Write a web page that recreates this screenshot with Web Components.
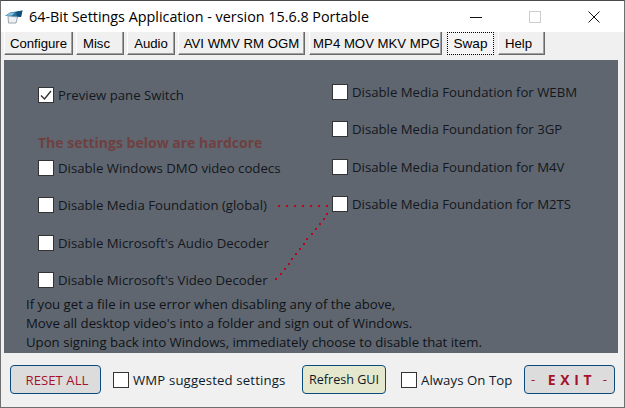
<!DOCTYPE html>
<html><head><meta charset="utf-8"><style>
html,body{margin:0;padding:0;background:#f0f0f0}
body{font-family:"Open Sans","Noto Sans",sans-serif;overflow:hidden}
</style></head><body>
<x-window>
<x-titlebar slot="title">64-Bit Settings Application - version 15.6.8 Portable</x-titlebar>
<x-tab slot="tabs" w="69">Configure</x-tab><x-tab slot="tabs" w="48" style="padding-right:7px">Misc</x-tab><x-tab slot="tabs" w="48">Audio</x-tab><x-tab slot="tabs" w="127">AVI WMV RM OGM</x-tab><x-tab slot="tabs" w="133" style="margin-left:1px;padding-left:2px">MP4 MOV MKV MPG</x-tab><x-tab slot="tabs" w="47" focus style="margin-left:2px">Swap</x-tab><x-tab slot="tabs" w="47" style="margin-left:1px;padding-right:6px">Help</x-tab>
<x-panel slot="panel"></x-panel>
<x-footer slot="footer"></x-footer>
</x-window>
<script>
function tpl(s){const t=document.createElement('template');t.innerHTML=s;return t}
function def(n,t,init){customElements.define(n,class extends HTMLElement{connectedCallback(){if(this.shadowRoot)return;const r=this.attachShadow({mode:'open'});r.appendChild(t.content.cloneNode(true));init&&init(this,r)}})}
def('x-window',tpl(`<style>:host{display:flex;flex-direction:column;box-sizing:border-box;width:625px;height:408px;background:#f0f0f0;border:1px solid #6e6e6e;border-top-color:#4a4a4a;overflow:hidden}
.tabs{display:flex;gap:3px;padding:0 0 0 3px;height:23px}
.p{display:block;margin:5px 5px 0 3px}
</style><slot name="title"></slot><div class="tabs"><slot name="tabs"></slot></div><div class="p"><slot name="panel"></slot></div><slot name="footer"></slot>`));
def('x-titlebar',tpl(`<style>:host{display:flex;align-items:center;height:31px;background:#fff;flex:none}
svg{display:block}.ic{margin-left:4px;width:18px;height:14px}
.t{margin-left:6px;font:14.35px "Open Sans",sans-serif;color:#000;flex:1;white-space:nowrap}
.b{width:58.5px;display:flex;justify-content:center;align-items:center}
.bs{display:flex;margin-right:1px}</style>
<svg class="ic" viewBox="0 0 18 14"><path d="M3 6 L12.5 7 L11 13 L3.5 13Z" fill="#eef1f4" stroke="#9aa4ae" stroke-width="1"/><path d="M0 6 L5 2.5 L17.5 0.5 L16 7 L6 6Z" fill="#2a7099"/><path d="M1 6 L5 3 L10 2.5 L7 5.5Z" fill="#86c3e0"/><path d="M11 2L17.5 .5L16 7L12 6.5Z" fill="#12507c"/></svg>
<div class="t"><slot></slot></div>
<div class="bs"><div class="b" style="position:relative;left:-1px"><svg width="12" height="12"><path d="M0 6.5H12" stroke="#111"/></svg></div><div class="b"><svg width="12" height="12"><rect x=".5" y=".5" width="11" height="11" fill="none" stroke="#ccc"/></svg></div><div class="b"><svg width="12" height="12"><path d="M.5 .5L11.5 11.5M11.5 .5L.5 11.5" stroke="#111"/></svg></div></div>`));
def('x-tab',tpl(`<style>:host{display:flex;align-items:center;justify-content:center;box-sizing:border-box;height:23px;background:#f0f0f0;border-style:solid;border-width:0 1px 1px 1px;border-color:#fff #696969 #696969 #fff;box-shadow:inset -1px -1px 0 #a0a0a0;font:13.2px "Liberation Sans",sans-serif;color:#000;white-space:nowrap}
:host([focus]){border:1px dotted #000;box-shadow:inset 0 0 0 1px #f8f8f8;background:#f4f4f4;font-size:13.6px}
</style><span><slot></slot></span>`),(h)=>{h.style.width=h.getAttribute('w')+'px'});
def('x-check',tpl(`<style>:host{display:flex;align-items:center;font:13.2px "Open Sans",sans-serif;color:var(--tc,#14171c);white-space:nowrap;height:16px}
.b{box-sizing:border-box;width:16px;height:16px;background:#fff;border:1px solid #333;margin-right:4px;flex:none;display:flex;align-items:center;justify-content:center}
svg{display:none}:host([checked]) svg{display:block}</style>
<div class="b"><svg width="12" height="12" viewBox="0 0 12 12"><path d="M1 6.5L4.5 10L11 2" fill="none" stroke="#333" stroke-width="1.4"/></svg></div><span><slot></slot></span>`));
def('x-btn',tpl(`<style>:host{display:flex;align-items:center;justify-content:center;box-sizing:border-box;height:29px;border:1px solid #0b4a7c;border-radius:4px;background:#dcdcdc;font:13.2px "Open Sans",sans-serif;white-space:nowrap;color:#a5122a}
</style><slot></slot>`),(h)=>{h.style.width=h.getAttribute('w')+'px'; if(h.hasAttribute('bg'))h.style.background=h.getAttribute('bg')});
const diag=[[197,68],[188,83],[176,98],[164,113],[152,128],[137,143],[128,158],[116,173],[104,188],[92,204],[83,218],[71,233],[59,248],[44,263]].map(([x,y])=>[Math.round(x/3+256),Math.round(y/3+130)]);
const horiz=[0,1,2,3,4,5,6].map(i=>[274+i*8,145]);
const dots=[...diag,...horiz].map(([x,y])=>`<rect x="${x}" y="${y}" width="2" height="2"/>`).join('');
def('x-panel',tpl(`<style>:host{display:block;position:relative;box-sizing:border-box;width:614px;height:293px;background:#5f6670}
.cols{display:flex}
.l{width:328px;padding:27px 0 0 34px;box-sizing:border-box;display:flex;flex-direction:column}
.r{padding:24px 0 0 0;display:flex;flex-direction:column;gap:21.33px}
.h{font:bold 14px "Open Sans",sans-serif;color:#6f403f;margin:30px 0 8px;line-height:19px}
.g{display:flex;flex-direction:column;gap:21.33px}
.n{position:absolute;left:22px;top:235px;font:13.2px/19px "Open Sans",sans-serif;color:#101316;white-space:nowrap}
svg{position:absolute;left:0;top:0;pointer-events:none}
</style><div class="cols"><div class="l"><x-check checked>Preview pane Switch</x-check><div class="h">The settings below are hardcore</div><div class="g"><x-check>Disable Windows DMO video codecs</x-check><x-check>Disable Media Foundation (global)</x-check><x-check>Disable Microsoft's Audio Decoder</x-check><x-check>Disable Microsoft's Video Decoder</x-check></div></div>
<div class="r"><x-check>Disable Media Foundation for WEBM</x-check><x-check>Disable Media Foundation for 3GP</x-check><x-check>Disable Media Foundation for M4V</x-check><x-check>Disable Media Foundation for M2TS</x-check></div></div>
<div class="n">If you get a file in use error when disabling any of the above,<br>Move all desktop video's into a folder and sign out of Windows.<br>Upon signing back into Windows, immediately choose to disable that item.</div>
<svg width="614" height="293" fill="#b5081f">${dots}</svg>`));
def('x-footer',tpl(`<style>:host{display:flex;align-items:center;height:29px;margin-top:12px;padding-left:9px}
x-check{--tc:#0d1a2a}
.e{display:flex;width:100%;justify-content:space-between;padding:0 7px 0 6px;box-sizing:border-box;font-weight:400}
.w{font-weight:700;font-size:14px;letter-spacing:.5px;margin-left:2px}</style>
<x-btn w="91" style="margin-right:12px;padding-left:3px">RESET ALL</x-btn><x-check style="width:189px;letter-spacing:.14px">WMP suggested settings</x-check><x-btn w="84" bg="#e5e8cd" style="color:#0d1a2a;margin-right:15px;font-size:12.6px">Refresh GUI</x-btn><x-check style="width:123px;letter-spacing:.07px">Always On Top</x-check><x-btn w="91"><span class="e"><span>-</span><span class="w">E X I T</span><span>-</span></span></x-btn>`));
</script></body></html>
